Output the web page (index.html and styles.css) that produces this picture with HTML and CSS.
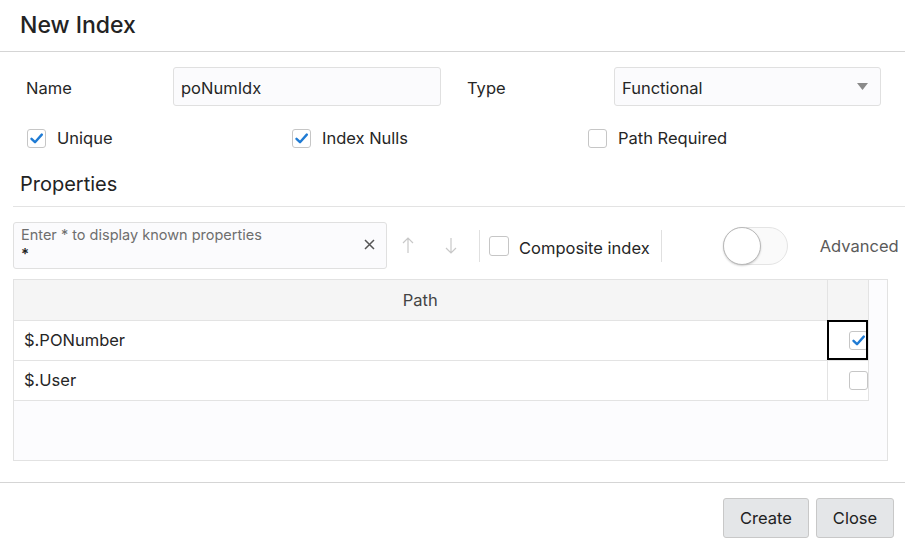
FILE: index.html
```html
<!DOCTYPE html>
<html>
<head>
<meta charset="utf-8">
<link rel="stylesheet" href="styles.css">
</head>
<body>
<div class="dialog">
  <header class="title-bar"><h1 class="title">New Index</h1></header>
  <main class="content">
    <div class="form-row">
      <label class="field-label">Name</label>
      <div class="text-input">poNumIdx</div>
      <span></span>
      <label class="field-label">Type</label>
      <div class="text-input select">
        <span>Functional</span>
        <svg class="caret" width="11" height="7" viewBox="0 0 11 7"><path d="M0 0 H11 L5.5 7 Z" fill="#8a8a8a"/></svg>
      </div>
    </div>
    <div class="checks-row">
      <div class="check-item">
        <span class="cbox"><svg width="17" height="17" viewBox="0 0 17 17"><path d="M3.5 8.8 L7 12.2 L13.8 4.6" fill="none" stroke="#1f7bd4" stroke-width="2.4" stroke-linecap="round" stroke-linejoin="round"/></svg></span>
        <span>Unique</span>
      </div>
      <div class="check-item">
        <span class="cbox"><svg width="17" height="17" viewBox="0 0 17 17"><path d="M3.5 8.8 L7 12.2 L13.8 4.6" fill="none" stroke="#1f7bd4" stroke-width="2.4" stroke-linecap="round" stroke-linejoin="round"/></svg></span>
        <span>Index Nulls</span>
      </div>
      <div class="check-item">
        <span class="cbox"></span>
        <span>Path Required</span>
      </div>
    </div>
    <h2 class="section-title">Properties</h2>
    <div class="section-rule"></div>
    <div class="toolbar">
      <div class="search">
        <div class="search-text">
          <div class="placeholder">Enter * to display known properties</div>
          <div class="search-value">*</div>
        </div>
        <svg class="clear" width="11" height="11" viewBox="0 0 11 11"><path d="M1 1 L10 10 M10 1 L1 10" stroke="#555" stroke-width="1.5"/></svg>
      </div>
      <svg class="arrow up" width="12" height="17" viewBox="0 0 12 17"><path d="M6 1 V16 M1 6 L6 1 L11 6" fill="none" stroke="#c8c8c8" stroke-width="1.2"/></svg>
      <svg class="arrow down" width="12" height="17" viewBox="0 0 12 17"><path d="M6 1 V16 M1 11 L6 16 L11 11" fill="none" stroke="#c8c8c8" stroke-width="1.2"/></svg>
      <span class="vsep first"></span>
      <div class="check-item composite">
        <span class="cbox"></span>
        <span class="composite-label">Composite index</span>
      </div>
      <span class="vsep second"></span>
      <div class="toggle"><span class="knob"></span></div>
      <span class="adv-label">Advanced</span>
    </div>
    <div class="grid-wrap">
      <table class="grid">
        <thead>
          <tr><th class="path-col">Path</th><th class="chk-col"></th></tr>
        </thead>
        <tbody>
          <tr>
            <td class="path-col">$.PONumber</td>
            <td class="chk-col focused"><div class="cell-chk"><span class="cbox"><svg width="17" height="17" viewBox="0 0 17 17"><path d="M3.5 8.8 L7 12.2 L13.8 4.6" fill="none" stroke="#1f7bd4" stroke-width="2.4" stroke-linecap="round" stroke-linejoin="round"/></svg></span></div></td>
          </tr>
          <tr>
            <td class="path-col">$.User</td>
            <td class="chk-col"><div class="cell-chk"><span class="cbox"></span></div></td>
          </tr>
        </tbody>
      </table>
    </div>
  </main>
  <footer class="footer">
    <button class="btn create">Create</button>
    <button class="btn close">Close</button>
  </footer>
</div>
</body>
</html>
```

FILE: styles.css
```css
* { box-sizing: border-box; }
html, body { margin: 0; padding: 0; background: #fff; }
body {
  font-family: Inter, "Noto Sans", "Liberation Sans", sans-serif;
  font-size: 16.5px;
  color: #262626;
  width: 905px;
  height: 550px;
  overflow: hidden;
}
.title-bar {
  height: 52px;
  border-bottom: 1px solid #d5d5d5;
  display: flex;
  align-items: center;
  padding: 0 0 2px 20px;
}
.title {
  margin: 0;
  font-size: 23px;
  font-weight: 500;
  line-height: 28px;
  color: #232323;
}
.content {
  padding-left: 13px;
}
.form-row {
  margin-top: 15px;
  padding-left: 13px;
  display: grid;
  grid-template-columns: 147px 268px 26px 147px 267px;
  align-items: center;
  height: 39px;
}
.field-label { padding-top: 2px; }
.text-input {
  height: 39px;
  background: #fbfbfd;
  border: 1px solid #e0e0e0;
  border-radius: 3px;
  padding: 2px 7px 0;
  display: flex;
  align-items: center;
}
.select { justify-content: space-between; padding-right: 12px; }
.caret { margin-top: -2px; }
.checks-row {
  margin-top: 12px;
  height: 40px;
  padding-left: 14px;
  display: grid;
  grid-template-columns: 265px 296px auto;
  align-items: center;
}
.check-item {
  display: flex;
  align-items: center;
  gap: 11px;
}
.cbox {
  width: 19px;
  height: 19px;
  border: 1px solid #c6c6c6;
  border-radius: 3px;
  background: #fff;
  display: inline-flex;
  align-items: center;
  justify-content: center;
  flex: none;
}
.section-title {
  margin: 14px 0 0 7px;
  font-size: 20px;
  font-weight: 400;
  line-height: 24px;
  color: #232323;
}
.section-rule {
  margin-top: 10px;
  height: 1px;
  background: #e3e3e3;
}
.toolbar {
  margin-top: 15px;
  height: 47px;
  display: flex;
  align-items: center;
}
.search {
  width: 374px;
  height: 47px;
  border: 1px solid #e0e0e0;
  border-radius: 3px;
  background: #fbfbfd;
  display: flex;
  align-items: center;
  padding: 0 11px 0 7px;
}
.search-text { flex: 1; }
.placeholder { font-size: 14.5px; color: #6e6e6e; line-height: 18px; margin-top: -5px; }
.search-value { font-size: 15px; color: #222; font-weight: 600; line-height: 14px; margin-top: 3px; }
.clear { margin-top: -2px; }
.arrow.up { margin-left: 15px; }
.arrow.down { margin-left: 31px; }
.vsep {
  width: 1px;
  height: 32px;
  background: #e0e0e0;
}
.vsep.first { margin-left: 22px; }
.composite { margin-left: 9px; gap: 10px; }
.composite .cbox { width: 20px; height: 20px; }
.composite-label { margin-top: 4px; }
.vsep.second { margin-left: 11px; }
.toggle {
  margin-left: 61px;
  width: 65px;
  height: 38px;
  border: 1px solid #e4e4e4;
  border-radius: 19px;
  background: #fafafa;
  position: relative;
}
.knob {
  position: absolute;
  left: -1px;
  top: -1px;
  width: 38px;
  height: 38px;
  border-radius: 50%;
  background: #fff;
  border: 1px solid #b9b9b9;
  box-shadow: 0 1px 2px rgba(0,0,0,0.18);
}
.adv-label {
  margin-left: 32px;
  font-size: 16.5px;
  color: #5a5a5a;
}
.grid-wrap {
  margin-top: 10px;
  width: 875px;
  height: 182px;
  border: 1px solid #e2e2e2;
  background: #fcfcfe;
}
.grid {
  border-collapse: collapse;
  width: 854px;
  table-layout: fixed;
}
.grid th, .grid td {
  padding: 0;
  border-bottom: 1px solid #e3e3e3;
}
.grid th {
  height: 40px;
  background: #f5f5f5;
  font-weight: 400;
  color: #444;
  border-right: 1px solid #e3e3e3;
}
.grid td {
  height: 40px;
  background: #fff;
  border-right: 1px solid #e3e3e3;
}
.grid .path-col { width: 813px; }
.grid td.path-col { padding-left: 10px; text-align: left; }
.grid .chk-col { width: 41px; }
.focused { outline: 2px solid #000; outline-offset: -2px; }
.cell-chk {
  display: flex;
  justify-content: flex-end;
}
.footer {
  margin-top: 21px;
  border-top: 1px solid #d5d5d5;
  padding: 15px 11px 0 0;
  display: flex;
  justify-content: flex-end;
  gap: 7px;
}
.btn {
  font-family: inherit;
  font-size: 16.5px;
  color: #222;
  height: 40px;
  background: #e4e6e8;
  border: 1px solid #c8c8c8;
  border-radius: 3px;
}
.btn.create { width: 86px; }
.btn.close { width: 78px; }
```
